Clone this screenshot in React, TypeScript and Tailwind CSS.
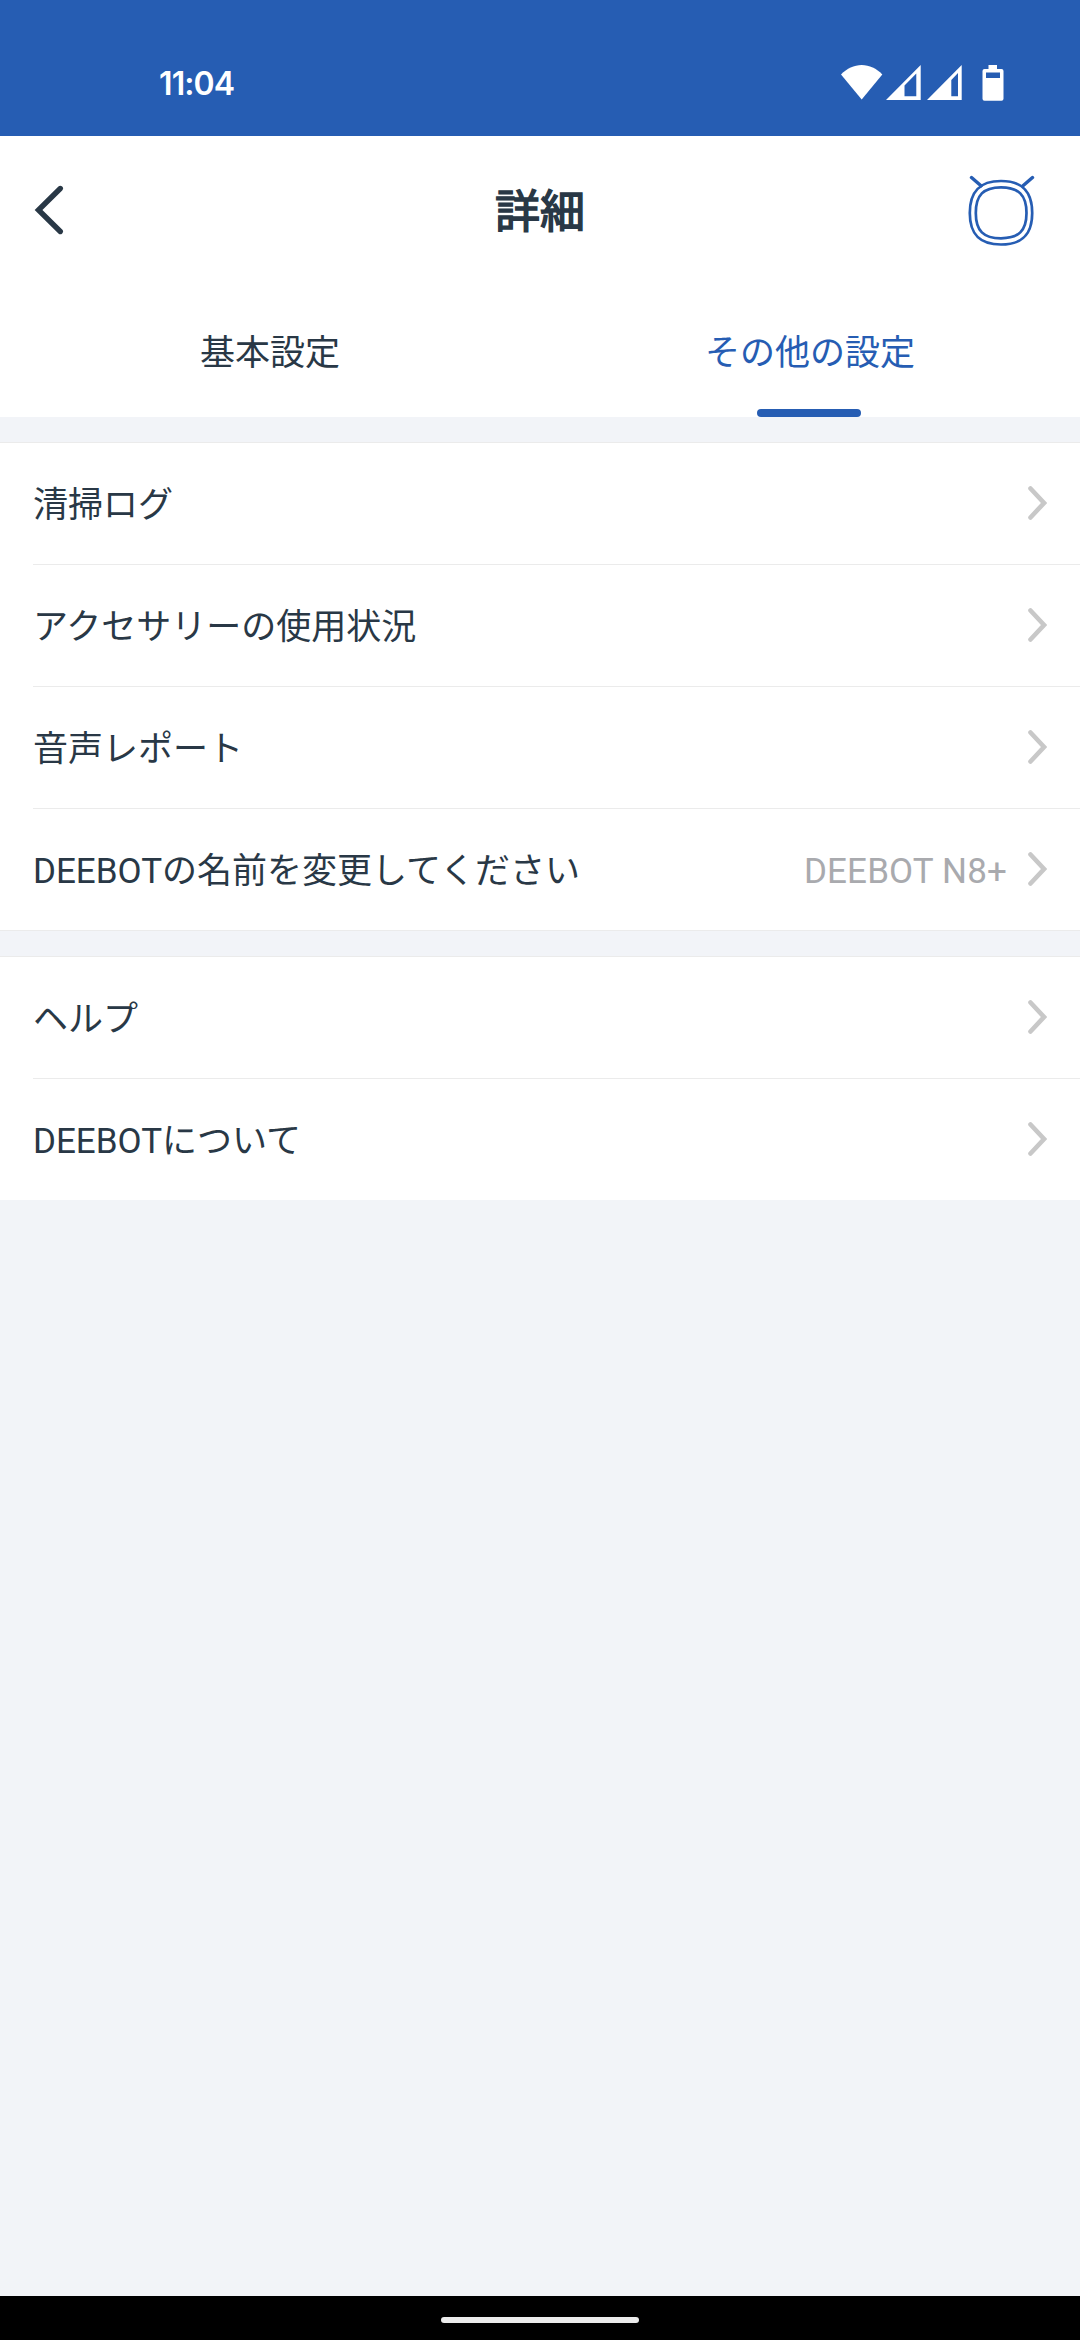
import type { ReactNode } from "react";

interface SettingRowProps {
  label: string;
  value?: string;
}

const StatusBar = () => {
  return (
    <div className="flex h-[136px] justify-between bg-[#265db3] pl-[159px] pr-[76px] pt-[60px]">
      <div className="font-['Inter',sans-serif] text-[32px] font-semibold leading-[48px] tracking-[-0.9px] text-white">
        11:04
      </div>
      <div className="mt-1 flex h-[38px] text-white">
        <svg className="mr-[3px]" width="42" height="38" viewBox="0 0 42 38" fill="currentColor">
          <path d="M0 10.5C6 4.5 13 1 20.7 1S35.500 4.500 41.300 10.500L20.700 35.500Z" />
        </svg>
        <svg className="mr-[6px]" width="35" height="38" viewBox="0 0 35 38" fill="currentColor">
          <path fillRule="evenodd" d="M0 36L34.700 1V36ZM18.500 32.300H30.300V9.500L18.500 21.500Z" />
        </svg>
        <svg className="mr-[20px]" width="35" height="38" viewBox="0 0 35 38" fill="currentColor">
          <path fillRule="evenodd" d="M0 36L34.700 1V36ZM24.300 32.300H31V9L24.300 16Z" />
        </svg>
        <svg width="22" height="38" viewBox="0 0 22 38" fill="currentColor">
          <path
            fillRule="evenodd"
            d="M6.500 1H15V5H19.500Q21.500 5 21.500 7V34.700Q21.500 36.700 19.500 36.700H2.500Q.500 36.700 .500 34.700V7Q.500 5 2.500 5H6.500ZM4 8.500V14H18V8.500Z"
          />
        </svg>
      </div>
    </div>
  );
};

const RobotIcon = () => {
  return (
    <svg width="68" height="74" viewBox="0 0 68 74" fill="none" stroke="#265db3" strokeWidth="2.700">
      <path d="M34 8C55 8 65.200 18 65.200 40S55 71.500 34 71.500S2.800 62 2.800 40S13 8 34 8Z" />
      <path d="M34 14.300C51.500 14.300 59.500 22 59.500 40S51.500 65.300 34 65.300S8.800 58 8.800 40S16.500 14.300 34 14.300Z" />
      <path d="M4.500 4.500L14 12.800M65.500 4.500L56 12.800" strokeWidth="3.400" strokeLinecap="round" />
    </svg>
  );
};

const Header = () => {
  return (
    <div className="flex h-[148px] items-center justify-between bg-white pl-[33px] pr-[45px]">
      <svg width="68" height="54" viewBox="0 0 68 54" fill="none" stroke="#293846" strokeWidth="5.400">
        <path d="M27.300 5.500L5.500 27L27.300 48.500" strokeLinecap="round" />
      </svg>
      <h1 className="pl-[12px] pt-[5px] text-[45px] font-normal leading-[60px] [-webkit-text-stroke:1.5px_#293846]">
        詳細
      </h1>
      <RobotIcon />
    </div>
  );
};

const Tabs = () => {
  return (
    <div className="grid h-[133px] grid-cols-2 bg-white text-center text-[35px] leading-[52px]">
      <div className="pt-[44px]">基本設定</div>
      <div className="flex flex-col items-center justify-between pt-[44px] text-[#265db3]">
        <span>その他の設定</span>
        <span className="mr-[2px] h-[8px] w-[104px] rounded-full bg-[#265db3]" />
      </div>
    </div>
  );
};

const SettingRow = ({ label, value }: SettingRowProps) => {
  return (
    <div className="ml-[33px] flex h-[122px] items-center border-b border-[#ebebeb] pr-[33px] last:border-transparent">
      <span className="flex-1 pt-[4px]">{label}</span>
      {value && (
        <span className="mr-[20px] pt-[4px] tracking-[0.15px] text-[#a9aaae]">{value}</span>
      )}
      <svg
        className="mb-px"
        width="20"
        height="36"
        viewBox="0 0 20 36"
        fill="none"
        stroke="#c8c8c8"
        strokeWidth="4.600"
      >
        <path d="M3.500 3.500L17 18L3.500 32.500" strokeLinecap="round" />
      </svg>
    </div>
  );
};

const SettingGroup = ({ children }: { children: ReactNode }) => {
  return <div className="bg-white text-[35px] leading-[52px]">{children}</div>;
};

const App = () => {
  return (
    <div
      lang="ja"
      className="flex h-[2340px] w-[1080px] flex-col bg-[#f2f4f8] font-['Roboto','Noto_Sans_CJK_JP',sans-serif] text-[#293846]"
    >
      <StatusBar />
      <Header />
      <Tabs />
      <div className="h-[26px] border-b border-[#ebebeb]" />
      <SettingGroup>
        <SettingRow label="清掃ログ" />
        <SettingRow label="アクセサリーの使用状況" />
        <SettingRow label="音声レポート" />
        <SettingRow label="DEEBOTの名前を変更してください" value="DEEBOT N8+" />
      </SettingGroup>
      <div className="-mt-px h-[27px] border-y border-[#ebebeb] bg-[#f2f4f8]" />
      <SettingGroup>
        <SettingRow label="ヘルプ" />
        <SettingRow label="DEEBOTについて" />
      </SettingGroup>
      <div className="-mt-px flex-1 bg-[#f2f4f8]" />
      <div className="flex h-[44px] justify-center bg-black pt-[21px]">
        <div className="h-[6px] w-[198px] rounded-full bg-[#ebebeb]" />
      </div>
    </div>
  );
};

export default App;
